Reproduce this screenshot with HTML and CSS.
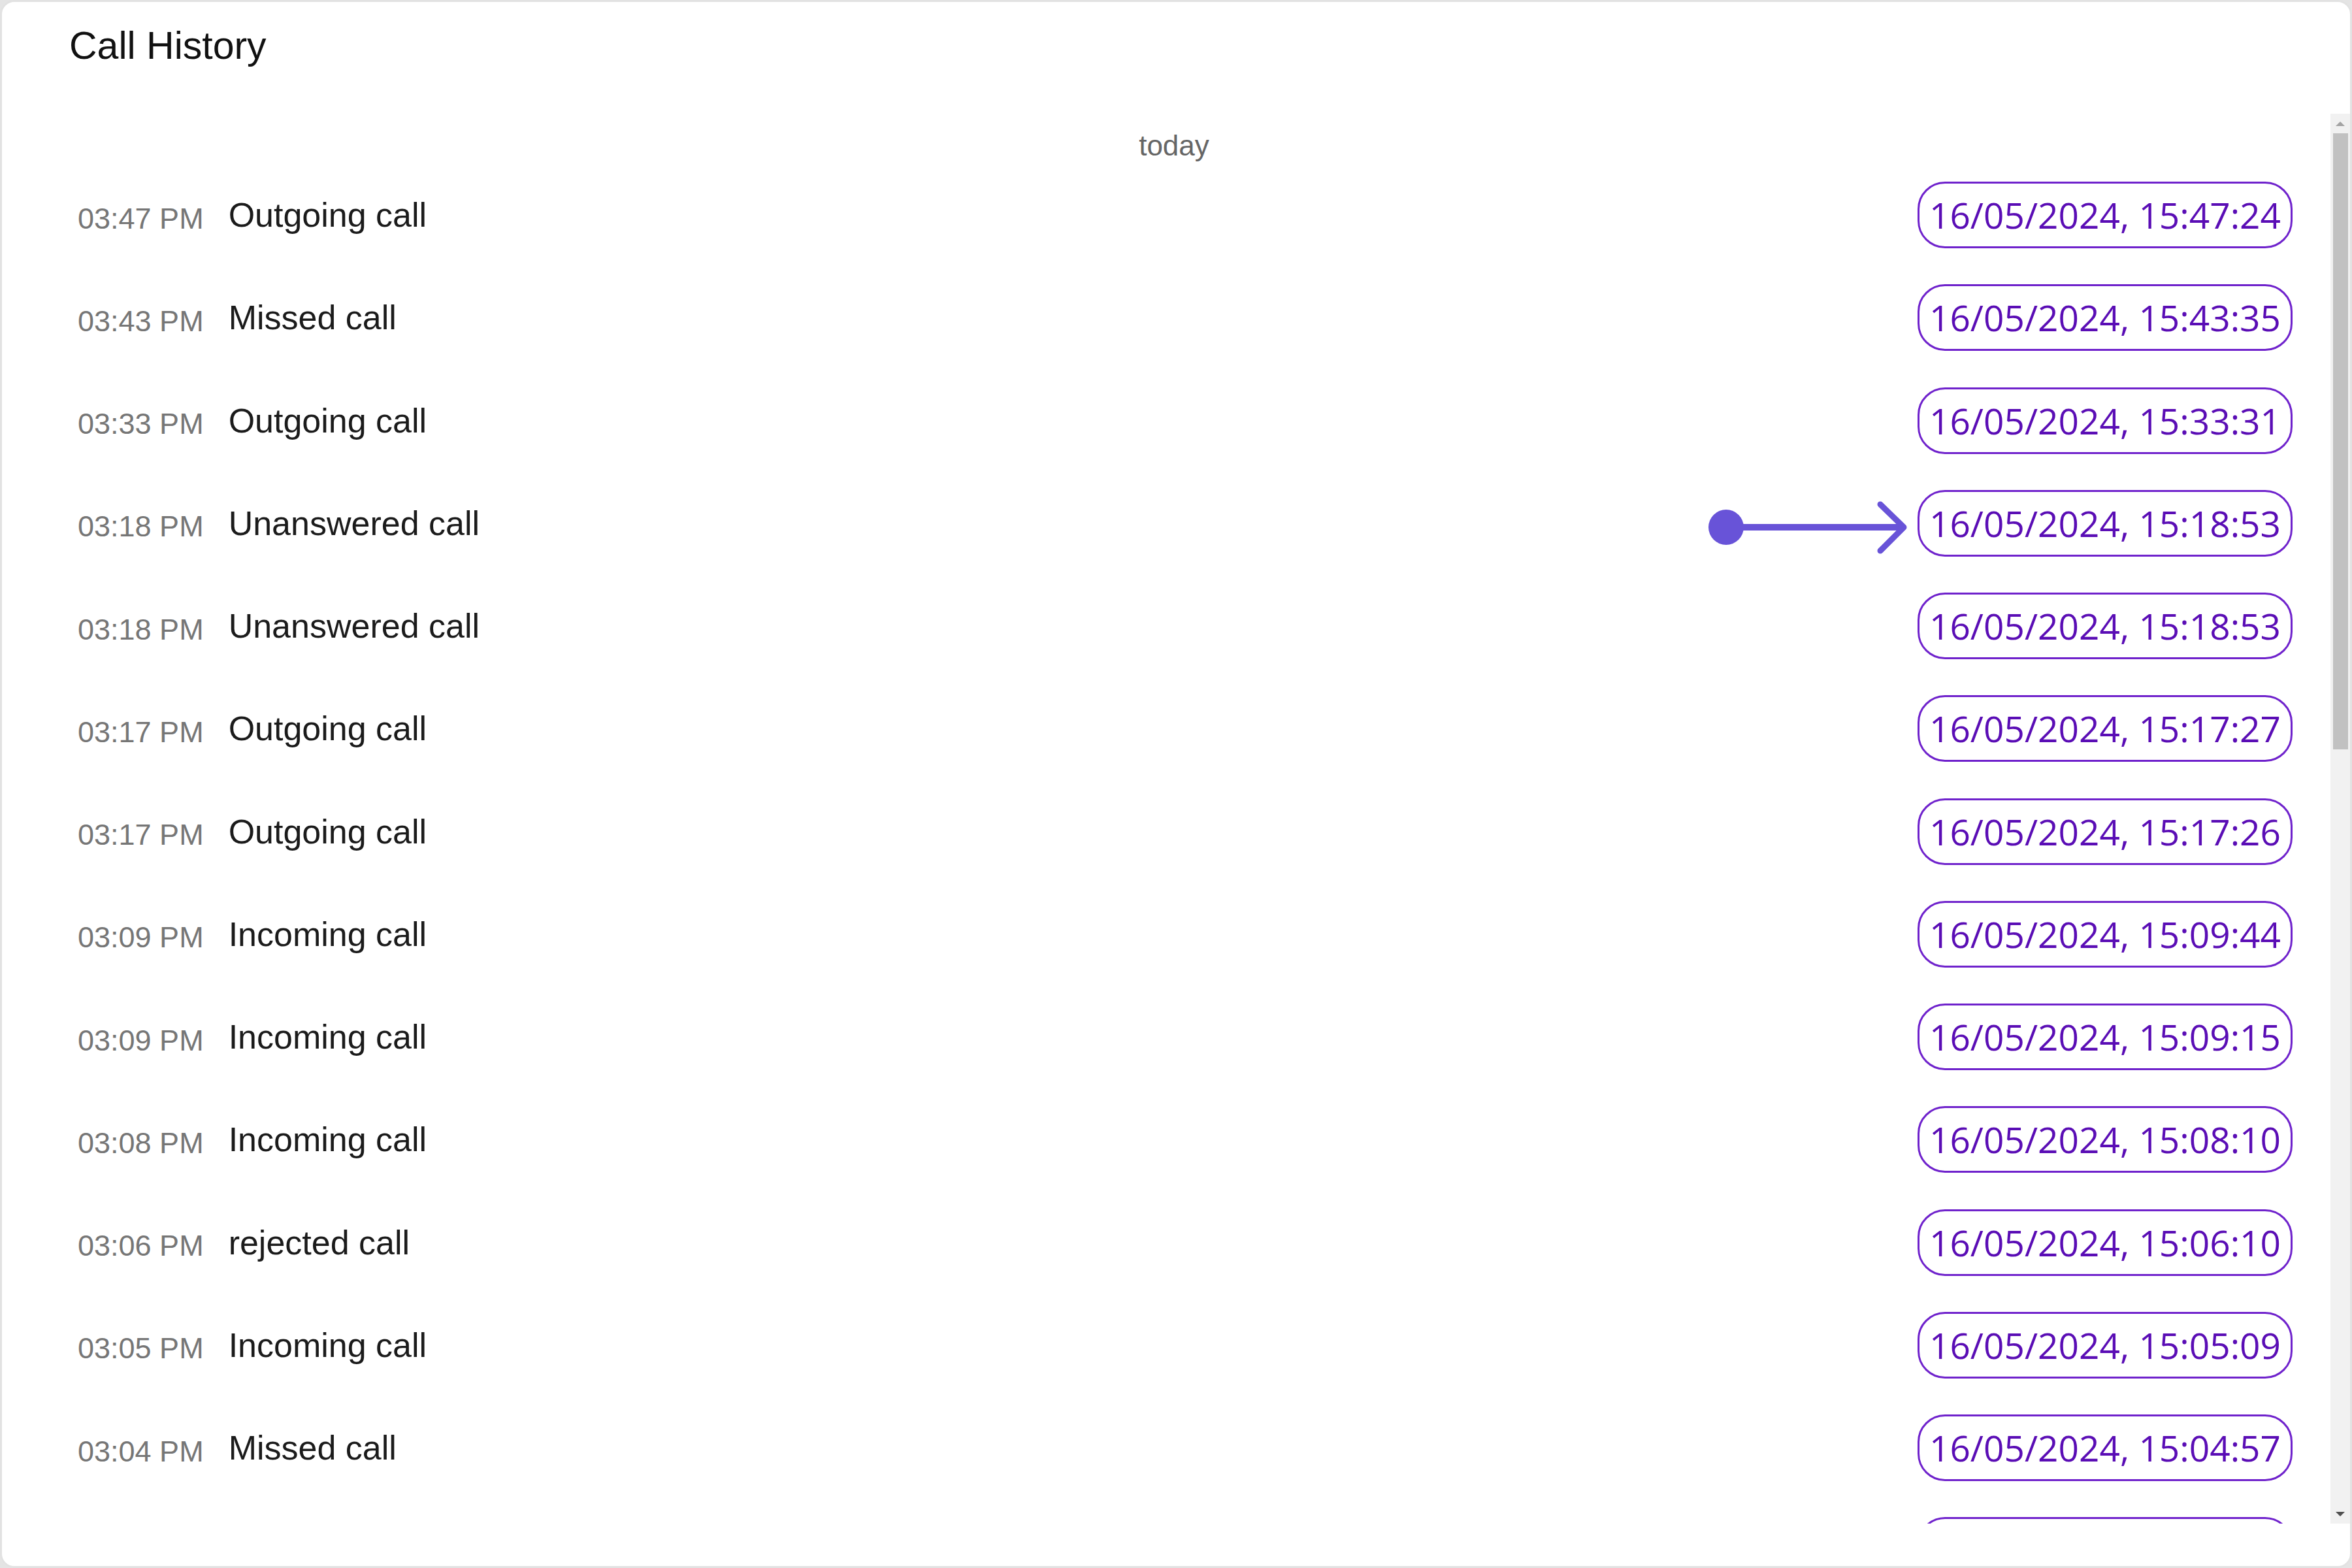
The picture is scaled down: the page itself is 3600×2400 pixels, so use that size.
FILE: index.html
```html
<!DOCTYPE html>
<html lang="en">
<head>
<meta charset="utf-8">
<title>Call History</title>
<link rel="stylesheet" href="styles.css">
</head>
<body>
<div class="card">
  <h1 class="title">Call History</h1>
  <div class="viewport">
    <div class="list">
      <div class="day">today</div>
      <div class="row"><div class="info"><span class="time">03:47 PM</span><span class="label">Outgoing call</span></div><span class="pill">16/05/2024, 15:47:24</span></div>
      <div class="row"><div class="info"><span class="time">03:43 PM</span><span class="label">Missed call</span></div><span class="pill">16/05/2024, 15:43:35</span></div>
      <div class="row"><div class="info"><span class="time">03:33 PM</span><span class="label">Outgoing call</span></div><span class="pill">16/05/2024, 15:33:31</span></div>
      <div class="row"><div class="info"><span class="time">03:18 PM</span><span class="label">Unanswered call</span></div><span class="pill">16/05/2024, 15:18:53</span></div>
      <div class="row"><div class="info"><span class="time">03:18 PM</span><span class="label">Unanswered call</span></div><span class="pill">16/05/2024, 15:18:53</span></div>
      <div class="row"><div class="info"><span class="time">03:17 PM</span><span class="label">Outgoing call</span></div><span class="pill">16/05/2024, 15:17:27</span></div>
      <div class="row"><div class="info"><span class="time">03:17 PM</span><span class="label">Outgoing call</span></div><span class="pill">16/05/2024, 15:17:26</span></div>
      <div class="row"><div class="info"><span class="time">03:09 PM</span><span class="label">Incoming call</span></div><span class="pill">16/05/2024, 15:09:44</span></div>
      <div class="row"><div class="info"><span class="time">03:09 PM</span><span class="label">Incoming call</span></div><span class="pill">16/05/2024, 15:09:15</span></div>
      <div class="row"><div class="info"><span class="time">03:08 PM</span><span class="label">Incoming call</span></div><span class="pill">16/05/2024, 15:08:10</span></div>
      <div class="row"><div class="info"><span class="time">03:06 PM</span><span class="label">rejected call</span></div><span class="pill">16/05/2024, 15:06:10</span></div>
      <div class="row"><div class="info"><span class="time">03:05 PM</span><span class="label">Incoming call</span></div><span class="pill">16/05/2024, 15:05:09</span></div>
      <div class="row"><div class="info"><span class="time">03:04 PM</span><span class="label">Missed call</span></div><span class="pill">16/05/2024, 15:04:57</span></div>
      <div class="row"><div class="info"></div><span class="pill pill-next"></span></div>
    </div>
    <div class="scrollbar">
      <div class="sb-btn"><span class="tri-up"></span></div>
      <div class="sb-thumb"></div>
      <div class="sb-track"></div>
      <div class="sb-btn"><span class="tri-down"></span></div>
    </div>
  </div>
  <svg class="pointer" width="330" height="90" viewBox="0 0 330 90" aria-hidden="true">
    <circle cx="39" cy="44" r="27" fill="#6853d8"/>
    <line x1="39" y1="44" x2="308" y2="44" stroke="#6853d8" stroke-width="10"/>
    <polyline points="275,9 311,44 275,80" fill="none" stroke="#6853d8" stroke-width="9" stroke-linecap="round" stroke-linejoin="round"/>
  </svg>
</div>
</body>
</html>
```

FILE: styles.css
```css
html, body {
  margin: 0;
  padding: 0;
}

body {
  background: #e4e4e4;
  width: 3600px;
  height: 2400px;
  font-family: "Liberation Sans", Arial, sans-serif;
}

.card {
  position: relative;
  box-sizing: border-box;
  width: 3600px;
  height: 2400px;
  background: #ffffff;
  border: 3px solid #e2e2e2;
  border-radius: 22px;
  display: flex;
  flex-direction: column;
  overflow: hidden;
}

.title {
  margin: 0 0 69px 0;
  padding: 32px 0 0 103px;
  font-size: 59px;
  line-height: 70px;
  font-weight: 400;
  color: #111111;
}

.viewport {
  display: flex;
  height: 2158px;
  overflow: hidden;
}

.list {
  flex: 1;
  overflow: hidden;
}

.day {
  box-sizing: border-box;
  height: 76.4px;
  padding: 24px 0 0 24px;
  text-align: center;
  font-size: 44px;
  line-height: 50px;
  color: #666666;
}

.row {
  box-sizing: border-box;
  height: 157.25px;
  display: flex;
  align-items: center;
  justify-content: space-between;
  padding: 0 58px 0 116px;
}

.info {
  display: flex;
  align-items: center;
}

.time {
  font-size: 45px;
  line-height: 50px;
  color: #767676;
  margin-top: 11px;
  margin-right: 38px;
}

.label {
  font-size: 52px;
  line-height: 60px;
  color: #1b1b1b;
}

.pill {
  box-sizing: border-box;
  height: 102px;
  padding: 0 15px;
  border: 3px solid #6f22cc;
  border-radius: 42px;
  font-family: "Open Sans", "Noto Sans", sans-serif;
  font-size: 55px;
  line-height: 96px;
  color: #5a0db5;
  white-space: nowrap;
}

.pill-next {
  width: 574px;
}

.scrollbar {
  width: 30px;
  background: #f1f1f1;
  display: flex;
  flex-direction: column;
}

.sb-btn {
  height: 30px;
  display: flex;
  align-items: center;
  justify-content: center;
}

.tri-up {
  width: 0;
  height: 0;
  border-left: 7px solid transparent;
  border-right: 7px solid transparent;
  border-bottom: 7px solid #a3a3a3;
}

.tri-down {
  width: 0;
  height: 0;
  border-left: 7px solid transparent;
  border-right: 7px solid transparent;
  border-top: 7px solid #505050;
}

.sb-thumb {
  height: 943px;
  margin: 0 3px 0 4px;
  background: #c1c1c1;
}

.sb-track {
  flex: 1;
}

.pointer {
  position: absolute;
  left: 2600px;
  top: 760px;
}
```
